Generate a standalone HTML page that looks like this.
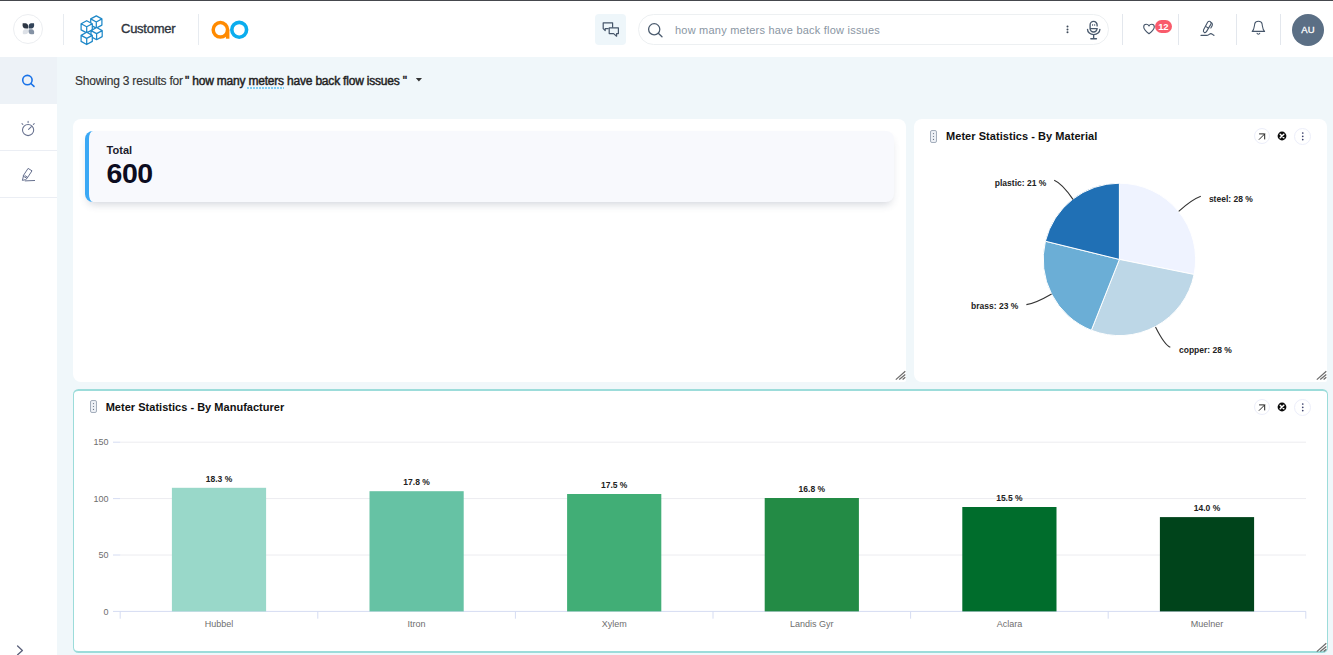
<!DOCTYPE html>
<html><head><meta charset="utf-8"><title>Customer</title>
<style>
*{box-sizing:border-box;margin:0;padding:0}
html,body{width:1333px;height:655px;overflow:hidden}
body{font-family:"Liberation Sans",sans-serif;background:#f0f7fa;color:#1a1a1a;position:relative}
.abs{position:absolute}
#topline{left:0;top:0;width:1333px;height:1px;background:#45474d}
#header{left:0;top:1px;width:1333px;height:56px;background:#fff}
#sidebar{left:0;top:57px;width:57px;height:598px;background:#fff}
.vsep{position:absolute;top:14px;width:1px;height:31px;background:#e3e7ed}
.sitem{position:absolute;left:0;width:57px;border-bottom:1.5px solid #ebeef4}
.panel{position:absolute;background:#fff;border-radius:8px}
.ptitle{position:absolute;font-weight:bold;font-size:11.5px;color:#111;white-space:nowrap}
svg{position:absolute;overflow:visible}
svg text{font-family:"Liberation Sans",sans-serif}
</style></head><body>
<div id="topline" class="abs"></div>
<div id="header" class="abs"></div>
<div id="sidebar" class="abs"></div>

<!-- menu circle -->
<div class="abs" style="left:13px;top:14px;width:30px;height:30px;border-radius:50%;border:1px solid #eceef1;background:#fff"></div>
<svg style="left:16px;top:17px" width="24" height="24" viewBox="16 17 24 24">
 <path d="M22.7 23.3 C27.4 22.6 28.6 24.2 28 28.4 C23.6 29.2 22 27.6 22.7 23.3Z" fill="#2d3644"/>
 <path d="M34 23.3 C29.3 22.6 28.1 24.2 28.7 28.4 C33.1 29.2 34.7 27.6 34 23.3Z" fill="#33445a"/>
 <path d="M22.9 34 C22.2 29.9 23.8 28.7 28 29.4 C28.7 33.4 27.2 34.7 22.9 34Z" fill="#dde1e7"/>
 <path d="M34 34 C34.7 29.9 33.1 28.7 28.7 29.4 C28.1 33.4 29.5 34.7 34 34Z" fill="#8492a4"/>
</svg>
<div class="vsep" style="left:62.6px;width:1.4px;background:#e7ebf0"></div>
<!-- cubes -->
<svg style="left:0;top:0" width="110" height="50" viewBox="0 0 110 50" fill="#fff" stroke="#1e88c8" stroke-width="1.25" stroke-linejoin="round"><path d="M96.3 15.9 L101.9 18.9 L101.9 25.1 L96.3 28.1 L90.7 25.1 L90.7 18.9Z M90.7 18.9 L96.3 22.0 L101.9 18.9 M96.3 22.0 L96.3 28.1"/><path d="M86.7 20.7 L92.3 23.8 L92.3 29.9 L86.7 32.9 L81.1 29.9 L81.1 23.8Z M81.1 23.8 L86.7 26.8 L92.3 23.8 M86.7 26.8 L86.7 32.9"/><path d="M96.6 27.5 L102.2 30.6 L102.2 36.6 L96.6 39.7 L91.0 36.6 L91.0 30.6Z M91.0 30.6 L96.6 33.6 L102.2 30.6 M96.6 33.6 L96.6 39.7"/><path d="M86.7 32.3 L92.3 35.4 L92.3 41.4 L86.7 44.5 L81.1 41.4 L81.1 35.4Z M81.1 35.4 L86.7 38.4 L92.3 35.4 M86.7 38.4 L86.7 44.5"/></svg>
<div class="abs" style="left:121px;top:21.4px;font-size:13px;color:#2e343d;-webkit-text-stroke:0.35px #2e343d;letter-spacing:-0.25px;white-space:nowrap" id="t_customer">Customer</div>
<div class="vsep" style="left:197.8px;width:1.4px;background:#e7ebf0"></div>
<!-- ao logo -->
<svg style="left:210px;top:19px" width="40" height="22" viewBox="210 19 40 22">
 <circle cx="220.4" cy="29.8" r="7.2" fill="none" stroke="#ff8a00" stroke-width="3.5"/>
 <rect x="225.9" y="29.8" width="3.5" height="8.9" fill="#ff8a00"/>
 <circle cx="239.2" cy="29.8" r="7.4" fill="none" stroke="#0badee" stroke-width="3.6"/>
</svg>
<!-- chat button -->
<div class="abs" style="left:595px;top:13.6px;width:31px;height:31.2px;border-radius:4px;background:#eef6fa"></div>
<svg style="left:601.6px;top:21.6px" width="19" height="17" viewBox="0 0 19 17" fill="none" stroke="#46566a" stroke-width="1.2" stroke-linejoin="round" stroke-linecap="round">
 <path d="M6.2 6.6 L3.2 6.6 L3.2 8.6 L1.2 6.6 L1.2 0.8 L10.6 0.8 L10.6 5.2"/>
 <path d="M7.2 5.8 L16.4 5.8 L16.4 11.6 L14.6 11.6 L14.6 14.2 L11.6 11.6 L7.2 11.6 Z"/>
</svg>
<!-- search box -->
<div class="abs" style="left:638px;top:13.5px;width:471px;height:31.5px;border-radius:16px;border:1px solid #edf0f2;background:#fff"></div>
<svg style="left:646px;top:21px" width="18" height="18" viewBox="646 21 18 18" fill="none" stroke="#4b5b6e" stroke-width="1.3" stroke-linecap="round">
 <circle cx="654.2" cy="29.3" r="5.6"/><path d="M658.3 33.3 L662 36.8"/>
</svg>
<div class="abs" style="left:675px;top:23.5px;font-size:11px;color:#8a96a3;white-space:nowrap;letter-spacing:0.22px" id="t_search">how many meters have back flow issues</div>
<!-- kebab -->
<svg style="left:1065px;top:25px" width="5" height="9" viewBox="0 0 5 9"><circle cx="2.5" cy="1.5" r="1" fill="#3f4b5a"/><circle cx="2.5" cy="4.4" r="1" fill="#3f4b5a"/><circle cx="2.5" cy="7.3" r="1" fill="#3f4b5a"/></svg>
<!-- mic -->
<svg style="left:1084px;top:18px" width="20" height="24" viewBox="1084 18 20 24" fill="none" stroke="#4b5b6e" stroke-width="1.35" stroke-linecap="round">
 <path d="M1097.1 25.9 L1097.1 24.9 A3.5 3.5 0 0 0 1090.1 24.9 L1090.1 28.6 L1097.1 28.6 A3.5 3.4 0 0 1 1090.1 28.6"/>
 <path d="M1092.6 24.6 L1092.6 25.4 M1094.7 24.6 L1094.7 25.4" stroke-width="1"/>
 <path d="M1087.5 29.3 A6.2 5.3 0 0 0 1099.9 29.3"/>
 <path d="M1093.65 34.8 L1093.65 38.4"/>
 <path d="M1090.9 38.7 L1096.4 38.7" stroke-width="1.5"/>
</svg>
<div class="vsep" style="left:1122.3px;width:1.2px"></div>
<!-- heart -->
<svg style="left:1143px;top:23px" width="12" height="12" viewBox="0 0 12 12" fill="none" stroke="#46566a" stroke-width="1.1" stroke-linejoin="round">
 <path d="M6 10.8 C2 7.6 0.7 5.8 0.7 3.9 C0.7 2.2 2 1.2 3.3 1.2 C4.5 1.2 5.5 1.9 6 2.9 C6.5 1.9 7.5 1.2 8.7 1.2 C10 1.2 11.3 2.2 11.3 3.9 C11.3 5.8 10 7.6 6 10.8Z"/>
</svg>
<div class="abs" style="left:1155px;top:19.5px;width:16.5px;height:13.5px;border-radius:7px;background:#f95b6b;color:#fff;font-size:9.5px;font-weight:bold;text-align:center;line-height:13.5px;letter-spacing:-0.3px">12</div>
<div class="vsep" style="left:1177.9px;width:1.2px"></div>
<!-- pen -->
<svg style="left:1198px;top:18px" width="20" height="22" viewBox="1198 18 20 22" fill="none" stroke="#46566a" stroke-width="1.1" stroke-linecap="round" stroke-linejoin="round">
 <path d="M1207.6 22.2 C1208.6 20.8 1210.4 21 1211 22.4 C1211.4 23.2 1211.2 23.8 1210.8 24.4 L1206.6 31.4 C1206 32.4 1205 32.8 1204.2 32.4 C1203.2 31.8 1203.2 30.8 1203.6 29.8 Z"/>
 <path d="M1205.6 26.4 L1208.6 28.2"/>
 <path d="M1211 22.6 C1212.6 23.4 1212.8 24.8 1211.8 26.4 L1210.8 28"/>
 <path d="M1201 35.4 L1206.4 35.4 C1208.8 35.4 1209.4 33.6 1210.8 33.6 C1212.2 33.6 1212.6 35 1214 35.4"/>
</svg>
<div class="vsep" style="left:1235.9px;width:1.2px"></div>
<!-- bell -->
<svg style="left:1251px;top:20px" width="15" height="16" viewBox="0 0 15 16" fill="none" stroke="#46566a" stroke-width="1.1" stroke-linecap="round" stroke-linejoin="round">
 <path d="M1.2 11.4 C3.4 9.6 3.2 6.4 3.8 3.6 C4.2 1.8 5.6 1.2 7.4 1.2 C9.2 1.2 10.6 1.8 11 3.6 C11.6 6.4 11.4 9.6 13.6 11.4 Z"/>
 <path d="M6 13.2 C6.4 14.6 8.4 14.6 8.8 13.2"/>
</svg>
<div class="vsep" style="left:1280px;width:1.2px"></div>
<div class="abs" style="left:1292px;top:14px;width:32px;height:32px;border-radius:50%;background:#5b6f85;color:#fff;font-size:9.5px;text-align:center;line-height:32px;letter-spacing:0.2px;-webkit-text-stroke:0.3px #fff">AU</div>


<div class="sitem" style="top:57px;height:47px;background:#edf2f7;border-bottom:none"></div>
<div class="sitem" style="top:104px;height:47px"></div>
<div class="sitem" style="top:151px;height:47px"></div>
<svg style="left:18px;top:71px" width="20" height="20" viewBox="18 71 20 20" fill="none" stroke="#1a73e8" stroke-width="1.6" stroke-linecap="round">
 <circle cx="27.4" cy="80.1" r="4.7"/><path d="M30.9 83.5 L34 86.4"/>
</svg>
<svg style="left:18px;top:118px" width="20" height="22" viewBox="18 118 20 22" fill="none" stroke="#67718f" stroke-width="1.05" stroke-linecap="round">
 <circle cx="28.1" cy="130" r="5.6"/>
 <path d="M28.1 121.3 L28.1 122.6 M22 123.6 L22.9 124.5 M34.2 123.6 L33.3 124.5 M28.6 129.4 L31.4 126.6"/>
</svg>
<svg style="left:18px;top:164px" width="22" height="22" viewBox="18 164 22 22" fill="none" stroke="#67718f" stroke-width="1" stroke-linecap="round" stroke-linejoin="round">
 <path d="M28.4 168.6 L32 170.8 L27 178.4 L23.4 176.2 Z"/>
 <path d="M23.4 176.2 L22.4 180.4 L25.6 179.6 L27 178.4"/>
 <path d="M25 175.6 L27.4 177.2"/>
 <path d="M25.2 180.9 L34.6 180.5"/>
</svg>
<svg style="left:14px;top:643px" width="12" height="14" viewBox="14 643 12 14" fill="none" stroke="#5a607a" stroke-width="1.3" stroke-linecap="round" stroke-linejoin="round">
 <path d="M17.6 646 L22.4 650.4 L17.6 654.8"/>
</svg>


<div class="abs" id="t_show" style="left:75px;top:73.7px;font-size:12px;color:#333;-webkit-text-stroke:0.15px #333;white-space:nowrap;letter-spacing:-0.2px"><span id="t_s1">Showing 3 results for</span><span id="t_s2" style="position:absolute;left:110px;top:0;color:#222;-webkit-text-stroke:0.45px #222">&quot; how many <span style="position:relative">meters<i id="t_dots" style="position:absolute;left:-1.1px;right:0.3px;top:13.2px;height:2px;background:repeating-linear-gradient(90deg,#80d0f7 0,#80d0f7 1.7px,transparent 1.7px,transparent 3px)"></i></span> have back flow issues &quot;</span></div>
<svg style="left:414.8px;top:77.3px" width="8" height="6" viewBox="0 0 8 6"><path d="M0.8 1 L7 1 L3.9 4.6Z" fill="#333"/></svg>
<!-- panel 1 -->
<div class="panel" style="left:73px;top:119px;width:833px;height:263px;border-radius:8px 8px 2px 8px"></div>
<div class="abs" style="left:85px;top:130.8px;width:808.8px;height:71.4px;border-radius:8px;background:#f8f9fd;border-left:4px solid #3aa8f5;box-shadow:0 5px 9px -3px rgba(60,70,100,0.24)"></div>
<div class="abs" id="t_total" style="left:106.6px;top:144px;font-size:11px;font-weight:bold;color:#1c1c2c;white-space:nowrap">Total</div>
<div class="abs" id="t_600" style="left:106.6px;top:156px;font-size:28.5px;letter-spacing:-0.5px;font-weight:bold;color:#0c0c20;white-space:nowrap;line-height:34px">600</div>
<svg style="left:894px;top:369.4px" width="12" height="12" viewBox="0 0 12 12" stroke="#6c6c6c" stroke-width="1.25" fill="none"><path d="M1.8 10.6 L11.3 2.3 M5.2 10.6 L11.3 5.4 M8.6 10.6 L11.3 8.3"/></svg>
<!-- panel 2 -->
<div class="panel" style="left:914px;top:119px;width:413px;height:263px;border-radius:8px 8px 2px 8px"></div>

<div class="abs" style="left:930.3px;top:129.9px;width:7px;height:13px;border:1px solid #a4aebc;border-radius:2px;background:#edf0f5"></div>
<svg style="left:930.3px;top:129.9px" width="7" height="13" viewBox="0 0 7 13"><circle cx="3.5" cy="3.6" r="0.6" fill="#6b7685"/><circle cx="3.5" cy="6.5" r="0.6" fill="#6b7685"/><circle cx="3.5" cy="9.4" r="0.6" fill="#6b7685"/></svg>
<div class="ptitle" id="t_p2" style="left:946px;top:130.4px;font-size:11px;line-height:13px;letter-spacing:0.05px">Meter Statistics - By Material</div>
<div class="abs" style="left:1253.5px;top:128px;width:16px;height:16px;border-radius:50%;border:1px solid #eceefa;background:#fff"></div>
<svg style="left:1253.5px;top:128px" width="16" height="16" viewBox="0 0 16 16" fill="none" stroke="#262626" stroke-width="1" stroke-linecap="round" stroke-linejoin="round"><path d="M5.2 11.4 L10.6 6 M5.5 5.9 L10.7 5.9 L10.7 11"/></svg>
<svg style="left:1277px;top:131px" width="10" height="10" viewBox="0 0 10 10"><circle cx="5" cy="5" r="4.4" fill="#0a0a0a"/><path d="M3.2 3.2 L6.8 6.8 M6.8 3.2 L3.2 6.8" stroke="#fff" stroke-width="1.45" stroke-linecap="round"/></svg>
<div class="abs" style="left:1293.5px;top:127.5px;width:17.5px;height:17.5px;border-radius:50%;border:1px solid #eceefa;background:#fff"></div>
<svg style="left:1293.5px;top:127.5px" width="17.5" height="17.5" viewBox="0 0 17.5 17.5"><circle cx="8.75" cy="5" r="0.85" fill="#3a3f6a"/><circle cx="8.75" cy="8.3" r="0.85" fill="#3a3f6a"/><circle cx="8.75" cy="11.6" r="0.85" fill="#3a3f6a"/></svg>
<svg style="left:0;top:0" width="1333" height="655" viewBox="0 0 1333 655"><path d="M1119.4 259.4 L1119.40 183.20 A76.2 76.2 0 0 1 1194.10 274.46Z" fill="#eff3ff" stroke="#fff" stroke-width="1" stroke-linejoin="round"/><path d="M1119.4 259.4 L1194.10 274.46 A76.2 76.2 0 0 1 1091.35 330.25Z" fill="#bdd7e7" stroke="#fff" stroke-width="1" stroke-linejoin="round"/><path d="M1119.4 259.4 L1091.35 330.25 A76.2 76.2 0 0 1 1045.40 241.22Z" fill="#6baed6" stroke="#fff" stroke-width="1" stroke-linejoin="round"/><path d="M1119.4 259.4 L1045.40 241.22 A76.2 76.2 0 0 1 1119.40 183.20Z" fill="#2070b5" stroke="#fff" stroke-width="1" stroke-linejoin="round"/><g fill="none" stroke="#333" stroke-width="1.1">
<path d="M1200.8 196.3 Q1192 199.5 1178.7 211.3"/>
<path d="M1170.3 347.2 Q1164.5 345 1155.5 327"/>
<path d="M1026.4 304.6 Q1036 303 1051.6 293.9"/>
<path d="M1054.2 180.3 Q1062 183.5 1073 199.4"/>
</g><g font-size="8.5" font-weight="bold" fill="#222">
<text x="1208.9" y="201.6">steel: 28 %</text>
<text x="1179" y="352.5">copper: 28 %</text>
<text x="1018.3" y="309.2" text-anchor="end">brass: 23 %</text>
<text x="1046.3" y="186.1" text-anchor="end">plastic: 21 %</text>
</g></svg><svg style="left:1315px;top:369.4px" width="12" height="12" viewBox="0 0 12 12" stroke="#6c6c6c" stroke-width="1.25" fill="none"><path d="M1.8 10.6 L11.3 2.3 M5.2 10.6 L11.3 5.4 M8.6 10.6 L11.3 8.3"/></svg>
<!-- panel 3 -->
<div class="panel" style="left:73px;top:388.8px;width:1255px;height:264.7px;border:1.5px solid #9cdcda;border-top-width:2px;border-bottom-width:2px;border-radius:5.5px"></div>

<div class="abs" style="left:89.8px;top:400px;width:7px;height:13px;border:1px solid #a4aebc;border-radius:2px;background:#edf0f5"></div>
<svg style="left:89.8px;top:400px" width="7" height="13" viewBox="0 0 7 13"><circle cx="3.5" cy="3.6" r="0.6" fill="#6b7685"/><circle cx="3.5" cy="6.5" r="0.6" fill="#6b7685"/><circle cx="3.5" cy="9.4" r="0.6" fill="#6b7685"/></svg>
<div class="ptitle" id="t_p3" style="left:105.7px;top:401.2px;font-size:11px;line-height:13px;letter-spacing:0.02px">Meter Statistics - By Manufacturer</div>
<div class="abs" style="left:1253.5px;top:399px;width:16px;height:16px;border-radius:50%;border:1px solid #eceefa;background:#fff"></div>
<svg style="left:1253.5px;top:399px" width="16" height="16" viewBox="0 0 16 16" fill="none" stroke="#262626" stroke-width="1" stroke-linecap="round" stroke-linejoin="round"><path d="M5.2 11.4 L10.6 6 M5.5 5.9 L10.7 5.9 L10.7 11"/></svg>
<svg style="left:1277px;top:402px" width="10" height="10" viewBox="0 0 10 10"><circle cx="5" cy="5" r="4.4" fill="#0a0a0a"/><path d="M3.2 3.2 L6.8 6.8 M6.8 3.2 L3.2 6.8" stroke="#fff" stroke-width="1.45" stroke-linecap="round"/></svg>
<div class="abs" style="left:1293.5px;top:398.5px;width:17.5px;height:17.5px;border-radius:50%;border:1px solid #eceefa;background:#fff"></div>
<svg style="left:1293.5px;top:398.5px" width="17.5" height="17.5" viewBox="0 0 17.5 17.5"><circle cx="8.75" cy="5" r="0.85" fill="#3a3f6a"/><circle cx="8.75" cy="8.3" r="0.85" fill="#3a3f6a"/><circle cx="8.75" cy="11.6" r="0.85" fill="#3a3f6a"/></svg>
<svg style="left:0;top:0" width="1333" height="655" viewBox="0 0 1333 655"><path d="M120.2 442.2 H1306" stroke="#ececf0" stroke-width="1"/><path d="M113 442.2 H120.2" stroke="#d5dcf2" stroke-width="1"/><path d="M120.2 498.6 H1306" stroke="#ececf0" stroke-width="1"/><path d="M113 498.6 H120.2" stroke="#d5dcf2" stroke-width="1"/><path d="M120.2 555.0 H1306" stroke="#ececf0" stroke-width="1"/><path d="M113 555.0 H120.2" stroke="#d5dcf2" stroke-width="1"/><path d="M113 611.4 H1306" stroke="#d5dcf2" stroke-width="1"/><path d="M120.2 611.4 V618.7" stroke="#d5dcf2" stroke-width="1"/><path d="M317.8 611.4 V618.7" stroke="#d5dcf2" stroke-width="1"/><path d="M515.4 611.4 V618.7" stroke="#d5dcf2" stroke-width="1"/><path d="M713.0 611.4 V618.7" stroke="#d5dcf2" stroke-width="1"/><path d="M910.6 611.4 V618.7" stroke="#d5dcf2" stroke-width="1"/><path d="M1108.2 611.4 V618.7" stroke="#d5dcf2" stroke-width="1"/><path d="M1305.8 611.4 V618.7" stroke="#d5dcf2" stroke-width="1"/><g font-size="9" fill="#6e6e6e" text-anchor="end"><text x="108.6" y="445.4">150</text><text x="108.6" y="501.8">100</text><text x="108.6" y="558.2">50</text><text x="108.6" y="614.6">0</text></g><rect x="171.9" y="487.8" width="94.2" height="123.6" fill="#99d8c9"/><rect x="369.5" y="491.2" width="94.2" height="120.2" fill="#66c2a4"/><rect x="567.1" y="494.0" width="94.2" height="117.4" fill="#41ae76"/><rect x="764.7" y="498.0" width="94.2" height="113.4" fill="#238b45"/><rect x="962.3" y="507.0" width="94.2" height="104.4" fill="#006d2c"/><rect x="1159.9" y="517.1" width="94.2" height="94.3" fill="#00441b"/><g font-size="8.5" font-weight="bold" fill="#222" text-anchor="middle"><text x="219.0" y="481.7">18.3 %</text><text x="416.6" y="485.1">17.8 %</text><text x="614.2" y="487.7">17.5 %</text><text x="811.8" y="491.9">16.8 %</text><text x="1009.4" y="500.9">15.5 %</text><text x="1207.0" y="511.0">14.0 %</text></g><g font-size="9" fill="#6e6e6e" text-anchor="middle"><text x="219.0" y="626.5">Hubbel</text><text x="416.6" y="626.5">Itron</text><text x="614.2" y="626.5">Xylem</text><text x="811.8" y="626.5">Landis Gyr</text><text x="1009.4" y="626.5">Aclara</text><text x="1207.0" y="626.5">Muelner</text></g></svg><svg style="left:1315px;top:641px" width="12" height="12" viewBox="0 0 12 12" stroke="#6c6c6c" stroke-width="1.25" fill="none"><path d="M1.8 10.6 L11.3 2.3 M5.2 10.6 L11.3 5.4 M8.6 10.6 L11.3 8.3"/></svg>

</body></html>
